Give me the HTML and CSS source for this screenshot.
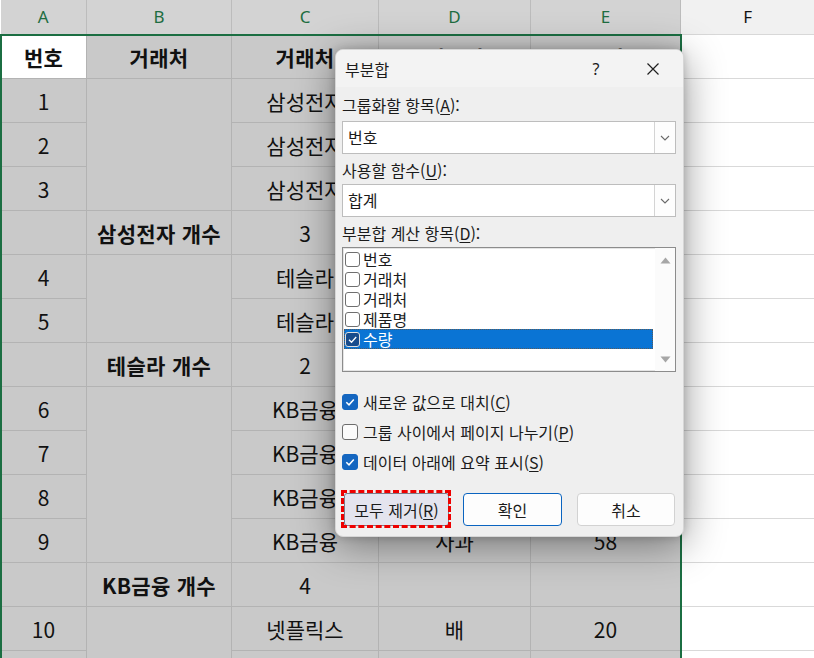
FILE: index.html
```html
<!DOCTYPE html>
<html lang="ko">
<head>
<meta charset="utf-8">
<title>부분합</title>
<link rel="stylesheet" href="styles.css">
</head>
<body>
<div class="page">
  <table class="sheet">
    <colgroup>
      <col class="w-a"><col class="w-b"><col class="w-c"><col class="w-d"><col class="w-e"><col class="w-f">
    </colgroup>
    <thead>
      <tr class="colhead">
        <th class="sel">A</th><th class="sel">B</th><th class="sel">C</th><th class="sel">D</th><th class="sel">E</th><th class="plain">F</th>
      </tr>
    </thead>
    <tbody>
      <tr>
        <td class="active bold">번호</td><td class="bold">거래처</td><td class="bold">거래처</td><td class="bold">제품명</td><td class="bold">수량</td><td class="out"></td>
      </tr>
      <tr><td>1</td><td rowspan="3"></td><td>삼성전자</td><td>사과</td><td>35</td><td class="out"></td></tr>
      <tr><td>2</td><td>삼성전자</td><td>배</td><td>42</td><td class="out"></td></tr>
      <tr><td>3</td><td>삼성전자</td><td>포도</td><td>27</td><td class="out"></td></tr>
      <tr><td></td><td class="bold">삼성전자 개수</td><td>3</td><td></td><td></td><td class="out"></td></tr>
      <tr><td>4</td><td rowspan="2"></td><td>테슬라</td><td>사과</td><td>15</td><td class="out"></td></tr>
      <tr><td>5</td><td>테슬라</td><td>딸기</td><td>33</td><td class="out"></td></tr>
      <tr><td></td><td class="bold">테슬라 개수</td><td>2</td><td></td><td></td><td class="out"></td></tr>
      <tr><td>6</td><td rowspan="4"></td><td>KB금융</td><td>배</td><td>24</td><td class="out"></td></tr>
      <tr><td>7</td><td>KB금융</td><td>포도</td><td>40</td><td class="out"></td></tr>
      <tr><td>8</td><td>KB금융</td><td>딸기</td><td>12</td><td class="out"></td></tr>
      <tr><td>9</td><td>KB금융</td><td>사과</td><td>58</td><td class="out"></td></tr>
      <tr><td></td><td class="bold">KB금융 개수</td><td>4</td><td></td><td></td><td class="out"></td></tr>
      <tr><td>10</td><td rowspan="2"></td><td>넷플릭스</td><td>배</td><td>20</td><td class="out"></td></tr>
      <tr><td>11</td><td>넷플릭스</td><td>포도</td><td>31</td><td class="out"></td></tr>
    </tbody>
  </table>
  <div class="selection"></div>

  <div class="dialog">
    <div class="titlebar">
      <span class="title">부분합</span>
      <span class="tb-btn">?</span>
      <span class="tb-btn">
        <svg width="14" height="14" viewBox="0 0 14 14"><path d="M1.5 1.5 L12.5 12.5 M12.5 1.5 L1.5 12.5" stroke="#1f1f1f" stroke-width="1.2" fill="none"/></svg>
      </span>
    </div>
    <div class="body">
      <div class="label l1">그룹화할 항목(<u>A</u>):</div>
      <div class="combo c1">
        <span class="combo-text">번호</span>
        <span class="combo-drop"><svg width="10" height="6" viewBox="0 0 10 6"><path d="M1 1 L5 5 L9 1" stroke="#6b6b6b" stroke-width="1.1" fill="none"/></svg></span>
      </div>
      <div class="label l2">사용할 함수(<u>U</u>):</div>
      <div class="combo c2">
        <span class="combo-text">합계</span>
        <span class="combo-drop"><svg width="10" height="6" viewBox="0 0 10 6"><path d="M1 1 L5 5 L9 1" stroke="#6b6b6b" stroke-width="1.1" fill="none"/></svg></span>
      </div>
      <div class="label l3">부분합 계산 항목(<u>D</u>):</div>
      <div class="listbox">
        <div class="items">
          <div class="item"><span class="lbox"></span><span>번호</span></div>
          <div class="item"><span class="lbox"></span><span>거래처</span></div>
          <div class="item"><span class="lbox"></span><span>거래처</span></div>
          <div class="item"><span class="lbox"></span><span>제품명</span></div>
          <div class="item picked"><span class="lbox on"><svg width="13" height="13" viewBox="0 0 13 13"><path d="M3 6.8 L5.5 9.2 L10.2 4" stroke="#fff" stroke-width="1.3" fill="none"/></svg></span><span>수량</span></div>
        </div>
        <div class="scroll">
          <svg width="11" height="7" viewBox="0 0 11 7"><path d="M0.5 6.5 L5.5 0.5 L10.5 6.5 Z" fill="#a6a6a6"/></svg>
          <svg width="11" height="7" viewBox="0 0 11 7"><path d="M0.5 0.5 L5.5 6.5 L10.5 0.5 Z" fill="#a6a6a6"/></svg>
        </div>
      </div>
      <div class="checks">
        <div class="check"><span class="cbox on"><svg width="14" height="14" viewBox="0 0 14 14"><path d="M3.3 7.2 L6 9.8 L10.8 4.4" stroke="#fff" stroke-width="1.5" fill="none"/></svg></span><span>새로운 값으로 대치(<u>C</u>)</span></div>
        <div class="check"><span class="cbox"></span><span>그룹 사이에서 페이지 나누기(<u>P</u>)</span></div>
        <div class="check"><span class="cbox on"><svg width="14" height="14" viewBox="0 0 14 14"><path d="M3.3 7.2 L6 9.8 L10.8 4.4" stroke="#fff" stroke-width="1.5" fill="none"/></svg></span><span>데이터 아래에 요약 표시(<u>S</u>)</span></div>
      </div>
      <div class="buttons">
        <span class="btn btn-remove"><span>모두 제거(<u>R</u>)</span></span>
        <span class="btn btn-ok"><span>확인</span></span>
        <span class="btn btn-cancel"><span>취소</span></span>
      </div>
    </div>
  </div>
</div>
</body>
</html>
```

FILE: styles.css
```css
html, body {
  margin: 0;
  padding: 0;
  background: #ffffff;
  overflow: hidden;
}

.page {
  position: relative;
  width: 814px;
  height: 658px;
  overflow: hidden;
  font-family: "Noto Sans CJK KR", "Noto Sans", sans-serif;
}

.sheet {
  border-collapse: collapse;
  table-layout: fixed;
  width: 814px;
}

.w-a { width: 86px; }
.w-b { width: 145px; }
.w-c { width: 147px; }
.w-d { width: 152px; }
.w-e { width: 150px; }
.w-f { width: 134px; }

.colhead th {
  height: 34px;
  padding: 0;
  font-family: "Noto Sans", "Open Sans", sans-serif;
  font-weight: 400;
  font-size: 17px;
  line-height: 20px;
  border-right: 1px solid #bcbcbc;
  border-bottom: 1px solid #bcbcbc;
}

.colhead th.sel {
  background: #d3d3d3;
  color: #1e6d41;
}

.colhead th.plain {
  background: #f1f1f1;
  color: #111;
  border-right: none;
  border-bottom: 1px solid #d8d8d8;
}

.sheet tbody tr {
  height: 44px;
}

.sheet td {
  padding: 0;
  background: #c9c9c9;
  border: 1px solid #b3b3b3;
  text-align: center;
  font-size: 21px;
  line-height: 26px;
  color: #111;
  vertical-align: middle;
  white-space: nowrap;
  overflow: hidden;
}

.sheet td.bold {
  font-weight: 700;
  font-size: 21px;
  letter-spacing: 0.3px;
}

.sheet td.active {
  background: #ffffff;
}

.sheet td.out {
  background: #ffffff;
  border: none;
  border-bottom: 1px solid #d9d9d9;
}

.selection {
  position: absolute;
  left: 0;
  top: 34px;
  width: 682px;
  height: 700px;
  box-sizing: border-box;
  border: 2px solid #1b6e42;
  pointer-events: none;
}

/* dialog */
.dialog {
  position: absolute;
  left: 335px;
  top: 49px;
  width: 349px;
  height: 488px;
  box-sizing: border-box;
  background: #efefef;
  border: 1px solid #d6d6d6;
  border-radius: 8px;
  box-shadow: 0 8px 40px rgba(0, 0, 0, 0.42), 0 0 8px rgba(0, 0, 0, 0.18);
  overflow: hidden;
  color: #1b1b1b;
  font-size: 16px;
}

.titlebar {
  display: flex;
  align-items: center;
  height: 37px;
  background: #f3f3f3;
  padding: 0 7px 0 9px;
  gap: 11px;
}

.title {
  flex: 1;
  line-height: 20px;
}

.tb-btn {
  width: 46px;
  height: 30px;
  display: flex;
  align-items: center;
  justify-content: center;
  font-family: "Noto Sans", sans-serif;
  font-size: 16px;
}

.body {
  padding: 0 7px 0 6px;
}

.label {
  line-height: 20px;
}

u {
  text-decoration-thickness: 1px;
  text-underline-offset: 2px;
}

.l1 { margin-top: 8px; }
.l2 { margin-top: 6px; }
.l3 { margin-top: 6px; }

.combo {
  display: flex;
  height: 33px;
  box-sizing: border-box;
  background: #ffffff;
  border: 1px solid #bdbdbd;
}

.c1 { margin-top: 6px; }
.c2 { margin-top: 4px; }

.combo-text {
  flex: 1;
  padding-left: 5px;
  line-height: 31px;
}

.combo-drop {
  width: 20px;
  display: flex;
  align-items: center;
  justify-content: center;
  border-left: 1px solid #d4d4d4;
  background: #fdfdfd;
}

.listbox {
  display: flex;
  margin-top: 4px;
  height: 125px;
  box-sizing: border-box;
  background: #ffffff;
  border: 1px solid #8c8c8c;
  box-shadow: inset 0 0 0 1px #e4e4e4;
}

.items {
  flex: 1;
  padding: 1px 0 0 1px;
}

.item {
  display: flex;
  align-items: center;
  height: 20px;
  line-height: 20px;
  gap: 3px;
}

.item.picked {
  background: #0a74d4;
  color: #ffffff;
  outline: 1px dotted #5a5a5a;
  outline-offset: -1px;
  margin-right: 2px;
}

.lbox {
  width: 15px;
  height: 15px;
  box-sizing: border-box;
  margin-left: 1px;
  border: 1px solid #6f6f6f;
  border-radius: 3px;
  background: #ffffff;
  display: flex;
  align-items: center;
  justify-content: center;
}

.lbox.on {
  background: #184c8c;
  border-color: #e0e0e0;
}

.scroll {
  width: 20px;
  display: flex;
  flex-direction: column;
  justify-content: space-between;
  align-items: center;
  padding: 9px 0 8px;
  background: #fbfbfb;
}

.checks {
  margin-top: 15px;
}

.check {
  display: flex;
  align-items: center;
  height: 30px;
  gap: 5px;
  line-height: 20px;
}

.cbox {
  width: 16px;
  height: 16px;
  box-sizing: border-box;
  border: 1px solid #6c6c6c;
  border-radius: 3px;
  background: #fbfbfb;
  display: flex;
  align-items: center;
  justify-content: center;
}

.cbox.on {
  background: #1466c0;
  border-color: #1466c0;
}

.buttons {
  display: flex;
  margin-top: 16px;
  padding-left: 2px;
  gap: 14px;
}

.btn {
  position: relative;
  height: 33px;
  box-sizing: border-box;
  display: flex;
  align-items: center;
  justify-content: center;
  border-radius: 4px;
  background: #fdfdfd;
  border: 1px solid #d2d2d2;
  line-height: 20px;
}

.btn-remove {
  width: 105px;
  background: #e4e4ee;
  border: 1px solid #7d7d8c;
  border-radius: 3px;
}

.btn-remove::after {
  content: "";
  position: absolute;
  top: -4px;
  left: -4px;
  right: -3px;
  bottom: -3px;
  border: 3px dashed #ee0000;
}

.btn-ok {
  width: 99px;
  border: 1px solid #0a64c0;
}

.btn-cancel {
  width: 98px;
  margin-left: 1px;
}
```
